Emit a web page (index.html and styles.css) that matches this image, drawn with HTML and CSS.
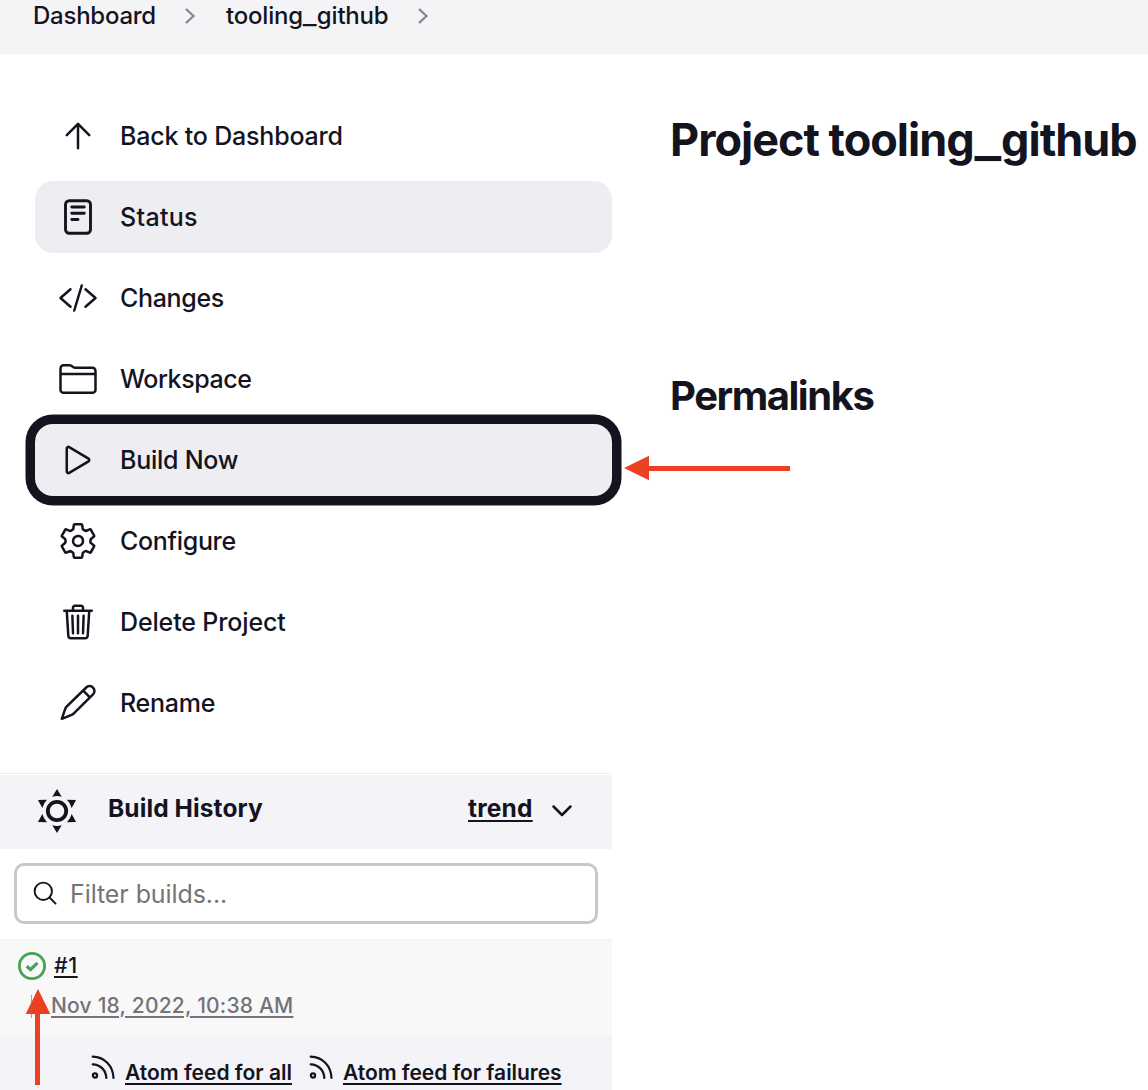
FILE: index.html
```html
<!DOCTYPE html>
<html lang="en">
<head>
<meta charset="utf-8">
<title>tooling_github [Jenkins]</title>
<link rel="stylesheet" href="styles.css">
</head>
<body>
<header class="breadcrumbs">
  <a class="crumb crumb-home">Dashboard</a>
  <svg class="chevron" viewBox="0 0 12 18"><path d="M2 2l7.500 7-7.500 7"/></svg>
  <a class="crumb crumb-job">tooling<span class="underscore">_</span>github</a>
  <svg class="chevron" viewBox="0 0 12 18"><path d="M2 2l7.500 7-7.500 7"/></svg>
</header>
<div class="page">
  <aside class="side">
    <nav class="tasks">
      <a class="task"><svg class="icon" viewBox="0 0 512 512"><path d="M112 244l144-144 144 144M256 120v292"/></svg><span class="t-back">Back to Dashboard</span></a>
      <a class="task active"><svg class="icon" viewBox="0 0 512 512"><rect x="96" y="48" width="320" height="416" rx="48"/><path d="M176 128h160M176 208h160M176 288h80"/></svg><span class="t-status">Status</span></a>
      <a class="task"><svg class="icon" viewBox="0 0 512 512"><path d="M160 368L32 256l128-112M352 368l128-112-128-112M304 96l-96 320"/></svg><span class="t-changes">Changes</span></a>
      <a class="task"><svg class="icon" viewBox="0 0 512 512"><path d="M440 432H72a40 40 0 01-40-40V120a40 40 0 0140-40h75.890a40 40 0 0122.190 6.720l27.840 18.560a40 40 0 0022.190 6.720H440a40 40 0 0140 40v240a40 40 0 01-40 40zM32 192h448"/></svg><span class="t-workspace">Workspace</span></a>
      <a class="task focused"><svg class="icon" viewBox="0 0 512 512"><path d="M112 111v290c0 17.440 17 28.520 31 20.160l247.900-148.370c12.120-7.250 12.120-26.330 0-33.580L143 90.840c-14-8.360-31 2.720-31 20.160z"/></svg><span class="t-build">Build Now</span></a>
      <a class="task"><svg class="icon" viewBox="0 0 512 512"><path d="M262.290 192.310a64 64 0 1057.400 57.400 64.130 64.130 0 00-57.400-57.400zM416.390 256a154.340 154.340 0 01-1.530 20.790l45.210 35.460a10.810 10.810 0 012.450 13.750l-42.770 74a10.810 10.810 0 01-13.140 4.590l-44.900-18.080a16.110 16.110 0 00-15.170 1.750A164.480 164.480 0 01325 400.800a15.940 15.940 0 00-8.820 12.140l-6.730 47.890a11.080 11.080 0 01-10.680 9.170h-85.540a11.110 11.110 0 01-10.690-8.870l-6.720-47.820a16.070 16.070 0 00-9-12.220 155.300 155.300 0 01-21.460-12.570 16 16 0 00-15.110-1.710l-44.890 18.070a10.810 10.810 0 01-13.140-4.580l-42.770-74a10.800 10.800 0 012.450-13.750l38.210-30a16.050 16.050 0 006-14.080c-.36-4.170-.58-8.330-.58-12.500s.21-8.270.58-12.350a16 16 0 00-6.070-13.940l-38.190-30A10.810 10.810 0 0149.480 186l42.770-74a10.810 10.810 0 0113.140-4.590l44.900 18.080a16.110 16.110 0 0015.170-1.750A164.480 164.480 0 01187 111.200a15.940 15.940 0 008.820-12.140l6.730-47.890A11.080 11.080 0 01213.230 42h85.540a11.110 11.110 0 0110.690 8.870l6.720 47.820a16.070 16.070 0 009 12.220 155.300 155.300 0 0121.460 12.570 16 16 0 0015.110 1.710l44.890-18.070a10.810 10.810 0 0113.140 4.580l42.770 74a10.800 10.800 0 01-2.450 13.750l-38.210 30a16.050 16.050 0 00-6.050 14.080c.33 4.140.55 8.300.55 12.470z"/></svg><span class="t-configure">Configure</span></a>
      <a class="task"><svg class="icon" viewBox="0 0 512 512"><path d="M112 112l20 320c.95 18.490 14.400 32 32 32h184c17.670 0 30.870-13.510 32-32l20-320M80 112h352M192 112V72a23.930 23.930 0 0124-24h80a23.930 23.930 0 0124 24v40M256 176v224M184 176l8 224M328 176l-8 224"/></svg><span class="t-delete">Delete Project</span></a>
      <a class="task"><svg class="icon pencil" viewBox="0 0 40 40"><path d="M3.800 35.800L7.300 25.700Q7.800 24.600 8.600 23.700L28.200 4.500A4.800 4.800 0 0 1 35 11.400L15.600 30.600Q14.700 31.500 13.600 31.900ZM25.300 7.700L31.800 14.400"/></svg><span class="t-rename">Rename</span></a>
    </nav>

    <section class="history">
      <div class="history-head">
        <svg class="weather" viewBox="-22 -22 44 44">
          <circle r="9.200"/>
          <path id="ray" d="M0-22L4.700-14.200Q0-15.600-4.700-14.200Z"/>
          <use href="#ray" transform="rotate(60)"/><use href="#ray" transform="rotate(120)"/><use href="#ray" transform="rotate(180)"/><use href="#ray" transform="rotate(240)"/><use href="#ray" transform="rotate(300)"/>
        </svg>
        <span class="history-title">Build History</span>
        <a class="trend">trend</a>
        <svg class="caret" viewBox="0 0 20 12"><path d="M1.500 1.500L10 10l8.500-8.500"/></svg>
      </div>
      <div class="filter">
        <svg class="search" viewBox="0 0 26 26"><circle cx="10.700" cy="10.700" r="9"/><path d="M17.200 17.200l6.300 6.300"/></svg>
        <span class="placeholder">Filter builds...</span>
      </div>
      <div class="build">
        <div class="build-row">
          <svg class="success" viewBox="0 0 28 28"><circle cx="14" cy="14" r="12.600"/><path d="M8.700 14.200l3.900 3.400 6.800-6.800"/></svg>
          <a class="number">#1</a>
        </div>
        <div class="date-row"><i class="tick"></i><a class="date">Nov 18, 2022, 10:38 AM</a></div>
      </div>
      <footer class="feeds">
        <svg class="rss" viewBox="0 0 24 25"><circle cx="4" cy="20.500" r="2.100"/><path d="M1.700 9.300C9.500 9.600 15 15.300 15.300 23M1.700 1.700C14 2.200 22 11 22.500 23"/></svg>
        <a class="feed feed-all">Atom feed for all</a>
        <svg class="rss" viewBox="0 0 24 25"><circle cx="4" cy="20.500" r="2.100"/><path d="M1.700 9.300C9.500 9.600 15 15.300 15.300 23M1.700 1.700C14 2.200 22 11 22.500 23"/></svg>
        <a class="feed feed-failures">Atom feed for failures</a>
      </footer>
    </section>
  </aside>
  <main class="main">
    <h1>Project tooling<span class="underscore">_</span>github</h1>
    <h2>Permalinks</h2>
  </main>
</div>
<svg class="arrow arrow-left" viewBox="0 0 166 26"><path d="M0 13L25 .7V11H166V16H25V25.300Z"/></svg>
<svg class="arrow arrow-up" viewBox="0 0 26 96"><path d="M13 0L25.300 25H15V96H10V25H.7Z"/></svg>
</body>
</html>
```
FILE: styles.css
```css
* { box-sizing: border-box; }
body {
  position: relative;
  margin: 0;
  height: 1090px;
  overflow: hidden;
  background: #fff;
  color: #14141f;
  font-family: Inter, "Liberation Sans", sans-serif;
  white-space: nowrap;
}
svg { display: block; flex: none; fill: none; stroke: #14141f; overflow: visible; }

.breadcrumbs {
  display: flex;
  align-items: center;
  height: 54px;
  padding: 0 0 22px 33px;
  background: #f4f4f7;
  font-size: 24px;
  font-weight: 450;
  line-height: 32px;
}
.crumb-home { width: 151px; letter-spacing: -0.25px; }
.crumb-job { width: 191px; letter-spacing: -0.2px; }
.chevron { width: 12px; height: 18px; margin-right: 30px; stroke: #85858c; stroke-width: 2.2; }
.underscore { display: inline-block; transform: scaleX(1.250); }
.crumb .underscore { margin: 0 1.500px; }
h1 .underscore { margin: 0 3.500px; }

.page { display: flex; }
.side { width: 612px; flex: none; }
.tasks {
  display: flex;
  flex-direction: column;
  gap: 9px;
  padding: 46px 0 34px 35px;
}
.task {
  display: flex;
  align-items: center;
  gap: 22px;
  height: 72px;
  padding-left: 23px;
  border-radius: 18px;
  font-size: 25px;
  font-weight: 450;
}
.active { background: #eeedf2; font-weight: 550; }
.focused { background: #eeedf2; box-shadow: 0 0 0 9.500px #14141f; }
.icon { width: 40px; height: 40px; stroke-width: 32; stroke-linecap: round; stroke-linejoin: round; }
.active .icon { stroke-width: 37; }
.pencil { stroke-width: 2.500; }
.t-back { letter-spacing: -0.190px; }
.t-status { letter-spacing: 0.3px; }
.t-changes { letter-spacing: -0.320px; }
.t-workspace { letter-spacing: -0.450px; }
.t-build { letter-spacing: -0.250px; }
.t-configure { letter-spacing: -0.320px; }
.t-delete { letter-spacing: -0.140px; }
.t-rename { letter-spacing: -0.250px; }

.history-head {
  display: flex;
  align-items: center;
  height: 76px;
  padding: 0 0 2px 35px;
  border-top: 1px solid #f0f0f4;
  background: #f3f3f8;
  box-shadow: inset 0 1px #fff;
  font-size: 24.500px;
  font-weight: 700;
}
.weather { width: 44px; height: 44px; }
.weather circle { stroke-width: 3.800; }
.weather path, .weather use { fill: #14141f; stroke: none; }
.history-title { width: 360px; margin-left: 29px; padding-bottom: 6px; letter-spacing: 0.1px; }
.trend { width: 84px; padding-bottom: 6px; }
.trend, .number, .date, .feed { text-decoration: underline; text-decoration-thickness: 2px; text-underline-offset: 3px; }
.trend { letter-spacing: 0.200px; }
.caret { width: 20px; height: 12px; margin-left: -0.5px; stroke-width: 2.500; stroke-linecap: round; stroke-linejoin: round; }

.filter {
  display: flex;
  align-items: center;
  gap: 12px;
  height: 61px;
  margin: 14px 14px 15px;
  padding-left: 16px;
  border: 3px solid #c3cacf;
  border-radius: 10px;
}
.search { width: 25px; height: 25px; stroke-width: 2; stroke-linecap: round; }
.placeholder { color: #757575; font-size: 25px; letter-spacing: -0.080px; }

.build { height: 98px; padding: 9px 0 0 18px; border-top: 2px solid #f3f3f8; background: #f8f8f8; }
.build-row { display: flex; align-items: center; gap: 8px; height: 32px; }
.success { width: 28px; height: 28px; stroke: #46a352; stroke-width: 2.800; }
.success path { stroke-width: 3.200; }
.number { padding-bottom: 3px; font-size: 21.500px; font-weight: 550; letter-spacing: 0.500px; }
.date-row { display: flex; align-items: center; height: 46px; margin-left: 13px; }
.tick { width: 1px; height: 23px; margin: 2px 19px 0 0; background: #a0a0a5; }
.date { color: #737378; font-size: 21px; font-weight: 550; letter-spacing: 0.210px; }

.feeds { display: flex; align-items: center; height: 53px; padding: 17px 0 0 91px; background: #f3f3f8; }
.rss { width: 24px; height: 25px; margin: -9px 10px 0 0; stroke-width: 2.200; stroke-linecap: round; }
.feed { font-size: 21px; font-weight: 600; }
.feed-all { width: 184px; }
.feed-failures { letter-spacing: -0.040px; }

.main { padding: 54px 0 0 58px; }
h1, h2 { margin: 0; font-weight: 700; }
h1 { height: 66px; font-size: 45px; line-height: 64px; letter-spacing: -1px; }
h2 { margin-top: 192px; font-size: 40px; line-height: 60px; letter-spacing: -1.450px; }

.arrow { position: absolute; fill: #ec4024; stroke: none; }
.arrow-left { left: 624px; top: 455px; width: 166px; height: 26px; }
.arrow-up { left: 25px; top: 989px; width: 26px; height: 96px; }
```
